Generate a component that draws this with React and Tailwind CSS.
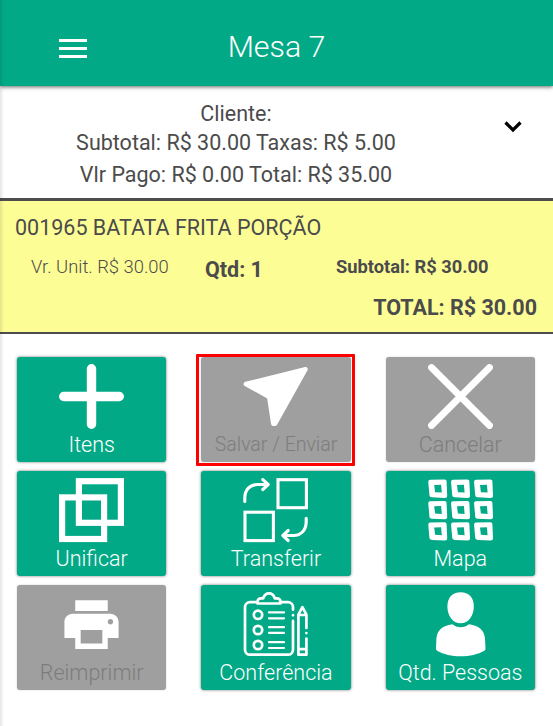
const squares = [
    [0, 0.6], [22.8, 0.6], [45.8, 0.6],
    [0, 22], [22.8, 22], [45.8, 22],
    [0, 43.2], [22.8, 43.2], [45.8, 43.2],
];

function Icon({ viewBox = "0 0 65 65", children }) {
    return (
        <svg
            className="block h-[65px] w-[65px] shrink-0"
            viewBox={viewBox}
            fill="none"
            stroke="none"
            strokeLinecap="round"
            strokeLinejoin="round"
            aria-hidden="true"
        >
            {children}
        </svg>
    );
}

function PlusIcon() {
    return (
        <Icon>
            <path d="M32.500 4.700v55.600M4.700 32.500h55.600" stroke="white" strokeWidth="9.400" />
        </Icon>
    );
}

function SendIcon() {
    return (
        <Icon>
            <path
                d="M2.800 20 62.600 5.200 32 59.800 30.200 59.800 26.200 33Z"
                fill="white"
                stroke="white"
                strokeWidth="4.400"
            />
        </Icon>
    );
}

function CloseIcon() {
    return (
        <Icon>
            <path d="M3.500 3.500l58 58M61.500 3.500l-58 58" stroke="white" strokeWidth="6.800" />
        </Icon>
    );
}

function MergeIcon() {
    return (
        <Icon>
            <g stroke="white" strokeWidth="6.200" strokeLinejoin="miter">
                <rect x="19.9" y="3.2" width="42" height="41.600" />
                <rect x="3.1" y="19.4" width="42" height="41.600" />
            </g>
        </Icon>
    );
}

function TransferIcon() {
    return (
        <Icon>
            <g stroke="white" strokeWidth="3.100">
                <rect x="35" y="1.7" width="28.400" height="28" strokeLinejoin="miter" />
                <rect x="2" y="34.2" width="28.400" height="28.400" strokeLinejoin="miter" />
                <path d="M1.800 23.400v-3.400C1.800 11.700 7 6.500 14.500 6.500h10.300M19.800 1.600l5.400 4.900-5.400 5" />
                <path d="M63.200 40.200v3.600c0 8.300-5.200 13.700-12.700 13.700H40M45.200 52.500 39.800 57.500l5.400 5" />
            </g>
        </Icon>
    );
}

function MapIcon() {
    return (
        <Icon>
            {squares.map(([x, y]) => (
                <path
                    key={`${x}-${y}`}
                    transform={`translate(${x} ${y})`}
                    d="M2.200 1.200 16.300 1c1.700 0 2.300.8 2.300 2.200l.6 13.600c0 1.800-.8 2.600-2.600 2.500L4 18.700c-1.600-.1-2.500-.8-2.600-2.300L.3 3.800C.2 2 .8 1.300 2.200 1.200ZM6.200 6.300l.9 7.300 6.700.4-.7-7.900Z"
                    fill="white"
                    fillRule="evenodd"
                />
            ))}
        </Icon>
    );
}

function PrinterIcon() {
    return (
        <Icon viewBox="0 0 24 24">
            <path
                d="M19 8H5c-1.66 0-3 1.34-3 3v6h4v4h12v-4h4v-6c0-1.66-1.34-3-3-3zm-3 11H8v-5h8v5zm3-7c-.55 0-1-.45-1-1s.45-1 1-1 1 .45 1 1-.45 1-1 1zm-1-9H6v4h12V3z"
                fill="white"
            />
        </Icon>
    );
}

function ChecklistIcon() {
    return (
        <Icon>
            <g stroke="white" strokeWidth="2.700">
                <path d="M14.500 10.200H7a5 5 0 0 0-5 5v42.500a5 5 0 0 0 5 5h38a5 5 0 0 0 5-5V28.900M37 10.200h8a5 5 0 0 1 5 5v2.600M50 23.200v.1" />
                <path d="M14.500 11.500v-1.700a3.500 3.500 0 0 1 3.500-3.500h2.200c1-3 2.700-4.900 5.800-4.900s4.900 1.900 5.800 4.900H34a3.500 3.500 0 0 1 3.500 3.500v1.700Z" />
                <circle cx="15" cy="22.800" r="4.200" />
                <circle cx="15" cy="38" r="4.200" />
                <circle cx="15" cy="53" r="4.200" />
                <path
                    d="M26 20.400h15M26 26.300h15M26 35.200h15M26 40.800h15M26 50.200h15M26 56h15"
                    strokeWidth="2.200"
                />
                <path d="M63.400 36V22.600l-4-7.400-4 7.400v40.100h8V46.500M63.400 41v.1M55.600 23h7.600M55.600 57.200h7.600" />
            </g>
        </Icon>
    );
}

function PersonIcon() {
    return (
        <Icon>
            <path
                d="M32.600.2C41 .2 45.800 5.700 45.800 14.200c0 9.500-5.200 17-13.200 17s-13.200-7.500-13.200-17C19.400 5.700 24.200.2 32.600.2Z"
                fill="white"
            />
            <path
                d="M24.400 32.200c2.500 2 5.200 3 8.300 3s5.800-1 8.300-3c10.500 1.200 15.500 6.500 16 14.500l.5 9.800c0 1-.3 1.600-1.200 2.200C50 62.400 41.500 64.200 32.700 64.200s-17.300-1.800-23.500-5.500c-.9-.6-1.200-1.200-1.200-2.200l.4-9.800C8.900 38.700 14 33.400 24.400 32.200Z"
                fill="white"
            />
        </Icon>
    );
}

const actions = [
    { label: "Itens", icon: PlusIcon },
    { label: "Salvar / Enviar", icon: SendIcon, disabled: true, highlighted: true },
    { label: "Cancelar", icon: CloseIcon, disabled: true },
    { label: "Unificar", icon: MergeIcon },
    { label: "Transferir", icon: TransferIcon },
    { label: "Mapa", icon: MapIcon },
    { label: "Reimprimir", icon: PrinterIcon, disabled: true },
    { label: "Conferência", icon: ChecklistIcon },
    { label: "Qtd. Pessoas", icon: PersonIcon },
];

function ActionButton({ label, icon: ActionIcon, disabled, highlighted }) {
    return (
        <div className="relative">
            <button
                disabled={disabled}
                className={`flex h-[104.5px] w-full flex-col items-center rounded-[3px] pt-[6.3px] font-light whitespace-nowrap ${
                    disabled
                        ? "bg-[#9f9f9f] text-[#7d7d7d] shadow-[0_0_2px_rgba(0,0,0,0.2)]"
                        : "bg-[#02a986] text-white shadow-[0_0_3px_rgba(0,0,0,0.55)]"
                }`}
            >
                <ActionIcon />
                <span
                    className={`mt-[3px] leading-[26px] ${
                        highlighted ? "text-[19.5px]" : "text-[21.5px]"
                    }`}
                >
                    {label}
                </span>
            </button>
            {highlighted && (
                <div className="pointer-events-none absolute -top-[3px] -right-1 -bottom-1 -left-[5px] rounded-[1px] border-3 border-[#fe0000]" />
            )}
        </div>
    );
}

export default function App() {
    return (
        <div className="relative h-[726px] w-[553px] overflow-hidden bg-white font-['Roboto',sans-serif] text-[#4b4b4b]">
            <header className="relative grid h-[86px] grid-cols-[1fr_auto_1fr] items-center bg-[#02a986] pt-2.5 text-white shadow-[0_1px_4px_rgba(0,0,0,0.6)]">
                <button className="ml-[59px] flex w-7 flex-col gap-[5px]" aria-label="Menu">
                    <span className="h-[3px] w-full bg-white" />
                    <span className="h-[3px] w-full bg-white" />
                    <span className="h-[3px] w-full bg-white" />
                </button>
                <h1 className="pb-[3px] text-[30.3px] font-light">Mesa 7</h1>
            </header>

            <section className="flex h-[112px] items-start pt-[13.5px] text-[21.5px]">
                <div className="w-[472px] text-center">
                    <p className="leading-[28px]">Cliente:</p>
                    <p className="leading-[29px]">Subtotal: R$ 30.00 Taxas: R$ 5.00</p>
                    <p className="leading-[35px]">Vlr Pago: R$ 0.00 Total: R$ 35.00</p>
                </div>
                <svg className="mt-[21px] ml-[32px] h-3 w-[18px]" viewBox="0 0 18 12" fill="none">
                    <path d="M1.500 1.500 9 9l7.500-7.500" stroke="black" strokeWidth="3.200" />
                </svg>
            </section>

            <section className="h-[136px] border-t-3 border-b-2 border-[#4d4d4f] bg-[#fdfd96] px-[15px] pt-[11px]">
                <h2 className="text-[21.5px] leading-8">001965 BATATA FRITA PORÇÃO</h2>
                <div className="flex pt-[9px] pl-4 leading-7">
                    <span className="w-[174px] text-[18.4px] font-light">Vr. Unit. R$ 30.00</span>
                    <span className="w-[131px] pt-[3px] text-[21.5px] font-bold">Qtd: 1</span>
                    <span className="text-[18.3px] font-bold">Subtotal: R$ 30.00</span>
                </div>
                <p className="pt-[10px] pr-px text-right text-[21.5px] leading-7 font-bold">
                    TOTAL: R$ 30.00
                </p>
            </section>

            <main className="grid grid-cols-3 gap-x-[35px] gap-y-[9.5px] pt-[23.4px] pr-[18px] pl-[17px]">
                {actions.map((action) => (
                    <ActionButton key={action.label} {...action} />
                ))}
            </main>

            <div className="pointer-events-none absolute inset-y-0 left-0 w-1 bg-linear-to-r from-black/10 to-transparent" />
        </div>
    );
}
